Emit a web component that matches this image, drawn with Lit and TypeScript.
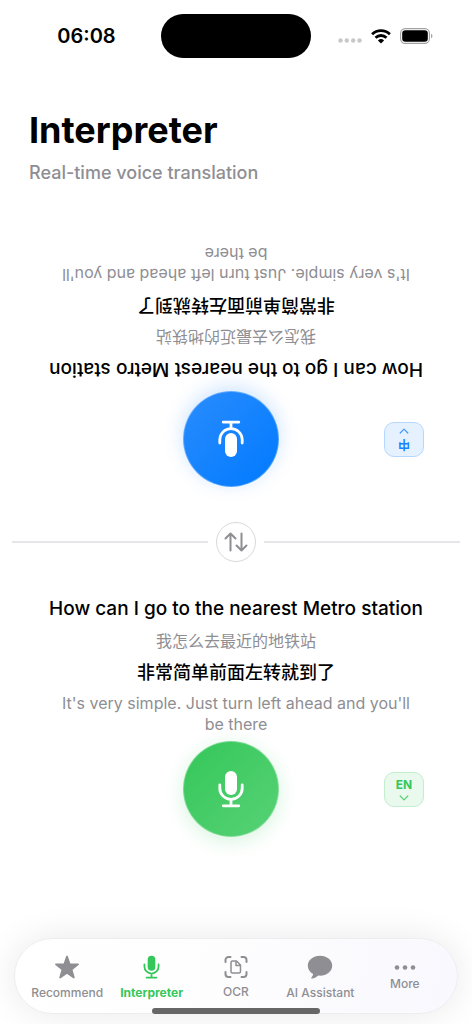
import { LitElement, html, css, svg } from "lit";
import { customElement, property } from "lit/decorators.js";

const micShape = svg`
  <rect x="9" y="1" width="12" height="24" rx="6" fill="currentColor"></rect>
  <path d="M3.8 15v3.200a11.200 11.200 0 0 0 22.400 0V15M15 29.500v6M7.200 35.800h15.600" fill="none" stroke="currentColor" stroke-width="2.800" stroke-linecap="round"></path>`;

@customElement("conversation-panel")
class ConversationPanel extends LitElement {
  @property({ type: Boolean, reflect: true }) flipped = false;
  @property() lang = "";
  @property() code = "";

  static styles = css`
    :host { display: flex; flex-direction: column; gap: 6px; --start: #34c759; --end: #58d276; --tint: #eaf9ee; --edge: #c2eecd; --accent: #34c759; --glow: rgba(52, 199, 89, 0.2); --drop: 4px; }
    :host([flipped]) { gap: 10px; --start: #2a8cfd; --end: #007aff; --tint: #e6f1ff; --edge: #b3d7ff; --accent: #1a84ff; --glow: rgba(0, 122, 255, 0.2); --drop: -4px; }
    .talk { display: flex; flex-direction: column; gap: 8px; padding: 0 48px; text-align: center; }
    p { margin: 0; }
    .main { font-size: 19px; line-height: 24px; font-weight: 500; color: #000; }
    .sub { font-size: 16px; line-height: 24px; color: #8e8e93; }
    .zh { font-size: 18px; }
    .long { line-height: 21px; padding: 0 8px; }
    .controls { display: grid; grid-template-columns: 1fr 96px 1fr; align-items: center; padding: 0 48px 0 38px; }
    .mic {
      grid-column: 2; width: 96px; height: 96px; padding: 0; border-radius: 50%;
      border: 1px solid rgba(255, 255, 255, 0.3); color: #fff;
      background: linear-gradient(135deg, var(--start), var(--end)) border-box;
      box-shadow: 0 var(--drop) 20px var(--glow);
      display: grid; place-items: center;
    }
    .mic svg { width: 30px; height: 38px; }
    .lang {
      justify-self: end; width: 40px; height: 35px; padding: 0; border-radius: 10px;
      border: 1px solid var(--edge); background: var(--tint); color: var(--accent);
      font: 700 12px/14px Inter, "Noto Sans CJK SC", sans-serif;
      display: flex; flex-direction: column; align-items: center; justify-content: center; gap: 3px;
    }
    .lang svg { width: 10px; height: 6px; opacity: 0.8; }
    :host([flipped]) .talk, :host([flipped]) .lang, :host([flipped]) .mic svg { transform: rotate(180deg); }
  `;

  render() {
    return html`
      <div class="talk">
        <p class="main">How can I go to the nearest Metro station</p>
        <p class="sub">我怎么去最近的地铁站</p>
        <p class="main zh">非常简单前面左转就到了</p>
        <p class="sub long">It's very simple. Just turn left ahead and you'll be there</p>
      </div>
      <div class="controls">
        <button class="mic" aria-label="Speak ${this.lang}">
          <svg viewBox="0 0 30 38">${micShape}</svg>
        </button>
        <button class="lang" aria-label="Language ${this.lang}">
          <span>${this.code}</span>
          <svg viewBox="0 0 10 6"><path d="M1.200 1 5 4.800 8.800 1" fill="none" stroke="currentColor" stroke-width="1.200" stroke-linecap="round" stroke-linejoin="round"></path></svg>
        </button>
      </div>`;
  }
}

const tabs = [
  { label: "Recommend", icon: html`<svg width="26" height="24" viewBox="0 0 26 24"><path d="M13 1.500l2.700 7.700 8.300.2-6.500 5.100 2.300 8-6.800-4.700-6.800 4.700 2.300-8L2 9.400l8.300-.2z" fill="currentColor" stroke="currentColor" stroke-width="1.800" stroke-linejoin="round"></path></svg>` },
  { label: "Interpreter", icon: html`<svg width="19" height="24" viewBox="0 0 30 38">${micShape}</svg>` },
  { label: "OCR", icon: html`<svg width="24" height="22" viewBox="0 0 24 22"><path d="M1.500 6V4a3 3 0 0 1 3-3h2M17.500 1h2a3 3 0 0 1 3 3v2M22.500 16v2a3 3 0 0 1-3 3h-2M6.500 21h-2a3 3 0 0 1-3-3v-2" fill="none" stroke="currentColor" stroke-width="2" stroke-linecap="round"></path><path d="M8.500 5h4l4 4v6.500a1.500 1.500 0 0 1-1.500 1.500H8.500A1.500 1.500 0 0 1 7 15.500v-9A1.500 1.500 0 0 1 8.500 5zM12 5.500V9.500h4" fill="none" stroke="currentColor" stroke-width="1.500" stroke-linejoin="round"></path></svg>` },
  { label: "AI Assistant", icon: html`<svg width="26" height="24" viewBox="0 0 26 24"><path d="M13 .8C6.200.8.800 5.200.800 10.700c0 3.600 2.100 6.600 5.300 8.400-.1 1.300-.8 2.500-1.700 3.500-.4.500-.1 1.100.6 1 2.400-.2 4.800-1.600 6.200-3 .6.100 1.200.1 1.800.1 6.800 0 12.200-4.400 12.200-10S19.800.8 13 .8z" fill="currentColor"></path></svg>` },
  { label: "More", icon: html`<svg width="22" height="5" viewBox="0 0 22 5"><circle cx="3" cy="2.500" r="2.300" fill="currentColor"></circle><circle cx="11" cy="2.500" r="2.300" fill="currentColor"></circle><circle cx="19" cy="2.500" r="2.300" fill="currentColor"></circle></svg>` },
];

@customElement("app-root")
class AppRoot extends LitElement {
  static styles = css`
    :host { display: flex; flex-direction: column; position: relative; min-height: 100vh; background: #fff; overflow: hidden; color: #000; font-family: Inter, "Noto Sans CJK SC", sans-serif; }
    .status { display: grid; grid-template-columns: 1fr 150px 1fr; padding: 14px 0 0; align-items: center; }
    .time { font-size: 20px; line-height: 24px; font-weight: 600; padding-left: 12px; text-align: center; }
    .island { height: 44px; border-radius: 22px; background: #000; }
    .signals { display: flex; align-items: center; justify-content: flex-end; gap: 9px; padding-right: 39px; }
    header { padding: 48px 29px 0; }
    h1 { margin: 0; font-size: 36px; line-height: 48px; font-weight: 700; }
    .tagline { margin: 8px 0 0; font-size: 18px; line-height: 22px; font-weight: 500; color: #8e8e93; }
    .first { margin-top: 59px; }
    .divider { display: flex; align-items: center; gap: 8px; padding: 0 12px; margin: 35px 0; }
    .rule { flex: 1; height: 2px; background: #e5e5ea; }
    .swap { width: 40px; height: 40px; padding: 0; border-radius: 50%; border: 1px solid #d9d9dc; background: #fff; color: #8e8e93; display: grid; place-items: center; }
    .tabs { display: grid; grid-template-columns: repeat(5, 1fr); margin: auto 14px 10px; height: 76px; padding: 4px 10px 0; box-sizing: border-box; border-radius: 38px; border: 1px solid #ededf0; background: linear-gradient(100deg, #fff, #fdfdfe 50%, #f8f8fe); box-shadow: 0 0 36px rgba(0, 0, 0, 0.09); }
    .tab { display: flex; flex-direction: column; align-items: center; justify-content: center; gap: 6px; color: #8e8e93; text-decoration: none; font-size: 12px; line-height: 16px; font-weight: 500; white-space: nowrap; }
    .tab.active { color: #34c759; font-weight: 700; }
    .home { position: absolute; left: 50%; bottom: 10px; width: 168px; height: 6px; margin-left: -84px; border-radius: 3px; background: #666; }
    svg { display: block; }
  `;

  render() {
    return html`
      <div class="status">
        <span class="time">06:08</span>
        <div class="island"></div>
        <div class="signals">
          <svg width="24" height="14" viewBox="0 0 24 14"><g fill="#c8c8ca"><circle cx="2.500" cy="11.500" r="2.200"></circle><circle cx="8.800" cy="11.500" r="2.200"></circle><circle cx="15.200" cy="11.500" r="2.200"></circle><circle cx="21.500" cy="11.500" r="2.200"></circle></g></svg>
          <svg width="20" height="15" viewBox="0 0 20 15"><path d="M1.100 5.200a12.800 12.800 0 0 1 17.800 0M4.500 8.700a8 8 0 0 1 11 0" fill="none" stroke="#000" stroke-width="2.800"></path><path d="M10 14.600 6.900 11.500a4.500 4.500 0 0 1 6.200 0z" fill="#000"></path></svg>
          <svg width="33" height="16" viewBox="0 0 33 16"><rect x=".6" y=".6" width="28.800" height="14.800" rx="4.600" fill="none" stroke="#a2a2a2" stroke-width="1.100"></rect><rect x="2.200" y="2.200" width="25.600" height="11.600" rx="3.200"></rect><path d="M31 5.800c2 .8 2 3.600 0 4.400z" fill="#a2a2a2"></path></svg>
        </div>
      </div>
      <header>
        <h1>Interpreter</h1>
        <p class="tagline">Real-time voice translation</p>
      </header>
      <conversation-panel class="first" flipped lang="Chinese" code="中"></conversation-panel>
      <div class="divider">
        <span class="rule"></span>
        <button class="swap" aria-label="Swap languages">
          <svg width="24" height="20" viewBox="0 0 24 20"><path d="M6.500 18.500v-17M1.500 6.500l5-5 5 5M17.500 1.500v17M12.500 13.500l5 5 5-5" fill="none" stroke="currentColor" stroke-width="2" stroke-linecap="round" stroke-linejoin="round"></path></svg>
        </button>
        <span class="rule"></span>
      </div>
      <conversation-panel lang="English" code="EN"></conversation-panel>
      <nav class="tabs">
        ${tabs.map((t) => html`<a class="tab ${t.label === "Interpreter" ? "active" : ""}" href="#">${t.icon}<span>${t.label}</span></a>`)}
      </nav>
      <div class="home"></div>`;
  }
}
